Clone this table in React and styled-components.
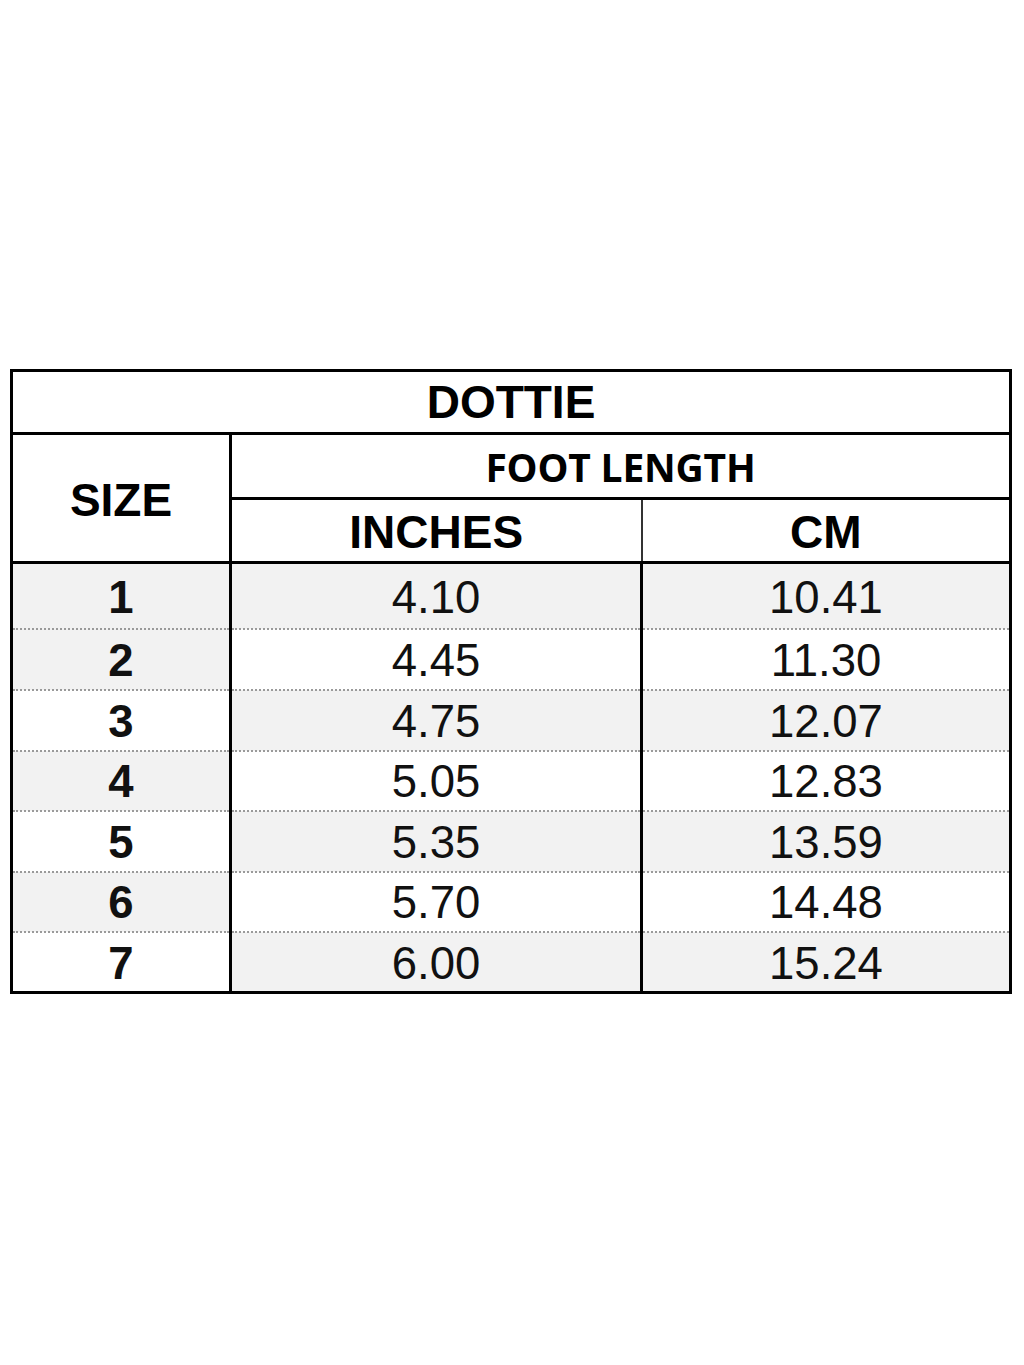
import React from "react";
import styled, { createGlobalStyle } from "styled-components";

const Global = createGlobalStyle`
  html, body { margin: 0; padding: 0; background: #fff; }
  body { font-family: "Liberation Sans", Arial, sans-serif; }
`;

const Page = styled.div`
  width: 1024px;
  height: 1365px;
  box-sizing: border-box;
  padding: 369px 0 0 10px;
  background: #fff;
`;

const Table = styled.table`
  width: 1002px;
  table-layout: fixed;
  border-collapse: collapse;
  border: 3px solid #000;
  color: #000;
`;

const Row = styled.tr`
  height: ${(p) => p.$h}px;
`;

const Title = styled.th`
  font-family: "Liberation Sans", Arial, sans-serif;
  font-weight: 700;
  font-size: 46px;
  border-bottom: 3px solid #000;
  padding: 0;
  text-align: center;
  vertical-align: middle;
  line-height: 1;
`;

const Head = styled.th`
  font-family: ${(p) => (p.$calibri ? '"Open Sans", "Liberation Sans", sans-serif' : '"Liberation Sans", Arial, sans-serif')};
  font-weight: 700;
  font-size: ${(p) => p.$size || 46}px;
  letter-spacing: ${(p) => (p.$calibri ? "-0.2px" : "0")};
  padding: 0;
  padding-top: ${(p) => (p.$calibri ? 0 : 3)}px;
  text-align: center;
  vertical-align: middle;
  line-height: 1;
  border-right: ${(p) => (p.$thinRight ? "2px solid #333" : "3px solid #000")};
  border-bottom: 3px solid #000;
  background: #fff;
`;

const Cell = styled.td`
  font-family: "Liberation Sans", Arial, sans-serif;
  font-weight: ${(p) => (p.$bold ? 700 : 400)};
  font-size: 45.5px;
  padding: 0;
  padding-top: 3px;
  text-align: center;
  vertical-align: middle;
  line-height: 1;
  color: #111;
  background: ${(p) => (p.$shade ? "#f2f2f2" : "#fff")};
  border-right: 3px solid #000;
  border-top: ${(p) => (p.$first ? "3px solid #000" : "2px dotted #9a9a9a")};
`;

const rows = [
  { size: "1", inches: "4.10", cm: "10.41", h: 66 },
  { size: "2", inches: "4.45", cm: "11.30", h: 61 },
  { size: "3", inches: "4.75", cm: "12.07", h: 61 },
  { size: "4", inches: "5.05", cm: "12.83", h: 60 },
  { size: "5", inches: "5.35", cm: "13.59", h: 61 },
  { size: "6", inches: "5.70", cm: "14.48", h: 60 },
  { size: "7", inches: "6.00", cm: "15.24", h: 61 },
];

const sizeShade = [true, true, false, true, false, true, false];

export default function App() {
  return (
    <>
      <Global />
      <Page>
        <Table>
          <colgroup>
            <col style={{ width: "219px" }} />
            <col style={{ width: "411px" }} />
            <col style={{ width: "369px" }} />
          </colgroup>
          <thead>
            <Row $h={63}>
              <Title colSpan={3}>DOTTIE</Title>
            </Row>
            <Row $h={65}>
              <Head rowSpan={2}>SIZE</Head>
              <Head colSpan={2} $calibri $size={39}>
                FOOT LENGTH
              </Head>
            </Row>
            <Row $h={64}>
              <Head $thinRight>INCHES</Head>
              <Head>CM</Head>
            </Row>
          </thead>
          <tbody>
            {rows.map((r, i) => (
              <Row key={r.size} $h={r.h}>
                <Cell $bold $shade={sizeShade[i]} $first={i === 0}>
                  {r.size}
                </Cell>
                <Cell $shade={i % 2 === 0} $first={i === 0}>
                  {r.inches}
                </Cell>
                <Cell $shade={i % 2 === 0} $first={i === 0}>
                  {r.cm}
                </Cell>
              </Row>
            ))}
          </tbody>
        </Table>
      </Page>
    </>
  );
}
